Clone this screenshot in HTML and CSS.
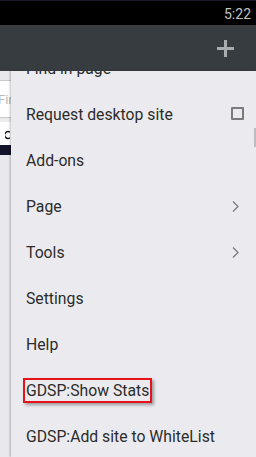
FILE: index.html
```html
<!DOCTYPE html>
<html>
<head>
<meta charset="utf-8">
<link rel="stylesheet" href="styles.css">
</head>
<body>
<div class="status"><span class="time">5:22</span></div>
<div class="toolbar">
  <svg class="plus" width="17" height="17" viewBox="0 0 17 17"><path d="M8.5 0V17M0 8.5H17" stroke="#a9abad" stroke-width="3"/></svg>
</div>
<div class="main">
  <div class="page">
    <div class="pg-top"></div>
    <div class="pg-search"><span>Find</span></div>
    <div class="pg-gap"></div>
    <div class="pg-icon"><svg width="8" height="12" viewBox="0 0 8 12"><path d="M6.5 2.2A4.5 4.5 0 1 0 6.5 9.8" fill="none" stroke="#111" stroke-width="1.8"/></svg></div>
    <div class="pg-band"></div>
    <div class="pg-rest"></div>
  </div>
  <div class="menu">
    <div class="list">
      <div class="item">Find in page</div>
      <div class="item">Request desktop site<span class="check"></span></div>
      <div class="item">Add-ons</div>
      <div class="item">Page<svg class="chev" width="7" height="11" viewBox="0 0 7 11"><path d="M1 0.5L6 5.5L1 10.5" fill="none" stroke="#777" stroke-width="1.2"/></svg></div>
      <div class="item">Tools<svg class="chev" width="7" height="11" viewBox="0 0 7 11"><path d="M1 0.5L6 5.5L1 10.5" fill="none" stroke="#777" stroke-width="1.2"/></svg></div>
      <div class="item">Settings</div>
      <div class="item">Help</div>
      <div class="item"><span class="hl">GDSP:Show Stats</span></div>
      <div class="item">GDSP:Add site to WhiteList</div>
    </div>
    <div class="thumb"></div>
  </div>
</div>
</body>
</html>
```
FILE: styles.css
```css
html, body {
  margin: 0;
  padding: 0;
}
body {
  width: 256px;
  height: 457px;
  overflow: hidden;
  background: #000;
  font-family: Roboto, "Liberation Sans", sans-serif;
}
.status {
  height: 24px;
  border-top: 1px solid #1a1a2a;
  background: #000;
  display: flex;
  justify-content: flex-end;
  align-items: center;
}
.time {
  color: #c4c4c4;
  font-size: 14px;
  margin-right: 5px;
  margin-top: 1px;
}
.toolbar {
  height: 46px;
  background: #373c41;
  display: flex;
  justify-content: flex-end;
  align-items: center;
  padding-right: 22px;
}
.main {
  display: flex;
  height: 386px;
}
.page {
  width: 11px;
  display: flex;
  flex-direction: column;
  background: #e8e8ec;
  overflow: hidden;
}
.pg-top {
  height: 9px;
  background: #e8e8ec;
  border-bottom: 1px solid #c9c9cc;
}
.pg-search {
  height: 36px;
  background: #fff;
  border-bottom: 1px solid #c9c9cc;
  display: flex;
  align-items: center;
  color: #b8b8b8;
  font-size: 13px;
  white-space: nowrap;
}
.pg-search span {
  margin-left: -2px;
}
.pg-gap {
  height: 4px;
  background: #ececee;
}
.pg-icon {
  height: 23px;
  background: #fff;
  display: flex;
  align-items: center;
  padding-left: 5px;
  padding-top: 2px;
  box-sizing: border-box;
}
.pg-band {
  height: 10px;
  background: #13132b;
}
.pg-rest {
  flex: 1;
  background: #e9e9ed;
}
.menu {
  flex: 1;
  position: relative;
  background: #ebebef;
  overflow: hidden;
  box-shadow: -1px 0 2px rgba(0,0,0,0.25);
}
.list {
  margin-top: -26px;
}
.item {
  height: 46px;
  display: flex;
  align-items: center;
  justify-content: space-between;
  padding: 0 12px 0 15px;
  color: #2b2b2b;
  font-size: 15.75px;
  white-space: nowrap;
}
.check {
  width: 9px;
  height: 9px;
  border: 2px solid #7a7a7a;
  border-radius: 1px;
  margin-top: -1px;
}
.chev {
  margin-right: 5px;
}
.hl {
  display: inline-block;
  border: 2px solid #e8121a;
  line-height: 21px;
  padding: 0 1px;
  margin-left: -3px;
  box-shadow: 2px 2px 3px rgba(0,0,0,0.35);
}
.thumb {
  position: absolute;
  right: 0;
  top: 57px;
  width: 2px;
  height: 19px;
  background: #bdbdc1;
}
```
